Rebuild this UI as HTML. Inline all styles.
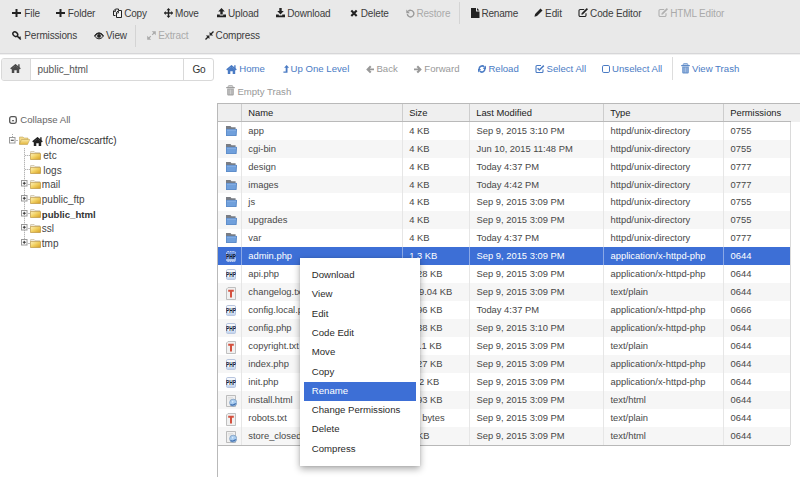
<!DOCTYPE html>
<html><head><meta charset="utf-8"><style>
html,body{margin:0;padding:0}
body{width:800px;height:477px;overflow:hidden;position:relative;background:#fff;font-family:"Liberation Sans", sans-serif}
.t{position:absolute;white-space:nowrap;line-height:14px;font-family:"Liberation Sans", sans-serif}
svg{display:block}
</style></head><body>
<div style="position:absolute;left:0px;top:0px;width:800px;height:53px;background:#e9e9e9"></div><div style="position:absolute;left:0px;top:53px;width:800px;height:1px;background:#d6d6d8"></div><div style="position:absolute;left:0px;top:54px;width:800px;height:1px;background:#f0f0f0"></div><svg style="position:absolute;left:12px;top:9px" width="9" height="8" viewBox="0 0 9 8"><path d="M3.5 0h2v3h3.5v2h-3.5v3h-2v-3h-3.5v-2h3.5z" fill="#222"/></svg><div class="t" style="left:24.3px;top:7.30px;font-size:10.0px;color:#3c3c3c;font-weight:normal;letter-spacing:-0.121px;">File</div><svg style="position:absolute;left:56px;top:9px" width="9" height="8" viewBox="0 0 9 8"><path d="M3.5 0h2v3h3.5v2h-3.5v3h-2v-3h-3.5v-2h3.5z" fill="#222"/></svg><div class="t" style="left:67.8px;top:7.30px;font-size:10.0px;color:#3c3c3c;font-weight:normal;letter-spacing:-0.142px;">Folder</div><svg style="position:absolute;left:112px;top:8px" width="11" height="11" viewBox="0 0 11 11"><path d="M3.5 7.5H1.5V3L3.5 1H6.5V2.5" fill="none" stroke="#222" stroke-width="1"/><path d="M4.5 9.5V4.5L6.5 2.5H9.5V9.5z" fill="#f4f4f4" stroke="#222" stroke-width="1"/><path d="M1.5 3.5H3.5V1.5M4.5 5H6.5V3" fill="none" stroke="#222" stroke-width="0.8"/></svg><div class="t" style="left:124.2px;top:7.30px;font-size:10.0px;color:#3c3c3c;font-weight:normal;letter-spacing:-0.175px;">Copy</div><svg style="position:absolute;left:164px;top:8px" width="9" height="10" viewBox="0 0 9 10"><path d="M4.5 0l2 2.2h-1.3v2.1h2.1v-1.3l2 2-2 2v-1.3h-2.1v2.1h1.3l-2 2.2-2-2.2h1.3v-2.1h-2.1v1.3l-2-2 2-2v1.3h2.1v-2.1h-1.3z" fill="#222"/></svg><div class="t" style="left:175px;top:7.30px;font-size:10.0px;color:#3c3c3c;font-weight:normal;letter-spacing:-0.183px;">Move</div><svg style="position:absolute;left:217px;top:8px" width="9" height="10" viewBox="0 0 9 10"><path d="M4.5 0l3.3 3.5h-2.1v3h-2.4v-3h-2.1z" fill="#222"/><path d="M0 6.5h2.8v1h3.4v-1h2.8v2.8h-9z" fill="#222"/></svg><div class="t" style="left:228px;top:7.30px;font-size:10.0px;color:#3c3c3c;font-weight:normal;letter-spacing:-0.159px;">Upload</div><svg style="position:absolute;left:276px;top:8px" width="9" height="10" viewBox="0 0 9 10"><path d="M3.3 0h2.4v3h2.1l-3.3 3.5-3.3-3.5h2.1z" fill="#222"/><path d="M0 6.5h2.8v1h3.4v-1h2.8v2.8h-9z" fill="#222"/></svg><div class="t" style="left:287.3px;top:7.30px;font-size:10.0px;color:#3c3c3c;font-weight:normal;letter-spacing:-0.167px;">Download</div><svg style="position:absolute;left:350px;top:9px" width="8" height="8" viewBox="0 0 8 8"><path d="M1.3 1.5L6.7 6.9M6.7 1.5L1.3 6.9" stroke="#222" stroke-width="2.1"/></svg><div class="t" style="left:360.7px;top:7.30px;font-size:10.0px;color:#3c3c3c;font-weight:normal;letter-spacing:-0.145px;">Delete</div><svg style="position:absolute;left:406px;top:8.5px" width="9" height="9" viewBox="0 0 9 9"><path d="M2.2 2.3A3.3 3.3 0 1 1 1.3 5.2" fill="none" stroke="#999" stroke-width="1.4"/><path d="M0.3 0.6v3.6h3.6z" fill="#999"/></svg><div class="t" style="left:416.4px;top:7.30px;font-size:10.0px;color:#aaa;font-weight:normal;letter-spacing:-0.150px;">Restore</div><div style="position:absolute;left:459px;top:2px;width:1px;height:22px;background:#d4d4d4"></div><svg style="position:absolute;left:471px;top:8px" width="9" height="10" viewBox="0 0 9 10"><path d="M0 0h5v3.5h3.5v6.5h-8.5z M6 0l2.5 2.5h-2.5z" fill="#222"/></svg><div class="t" style="left:481.4px;top:7.30px;font-size:10.0px;color:#3c3c3c;font-weight:normal;letter-spacing:-0.189px;">Rename</div><svg style="position:absolute;left:534px;top:8px" width="9" height="10" viewBox="0 0 9 10"><path d="M6.5 0.5l2 2-5.5 5.5-2.5 0.7 0.6-2.6z" fill="#222"/></svg><div class="t" style="left:545.1px;top:7.30px;font-size:10.0px;color:#3c3c3c;font-weight:normal;letter-spacing:-0.129px;">Edit</div><svg style="position:absolute;left:578px;top:7px" width="11" height="11" viewBox="0 0 11 11"><path d="M6.2 2.5H2.3A1.3 1.3 0 0 0 1 3.8V8.2A1.3 1.3 0 0 0 2.3 9.5H6.7A1.3 1.3 0 0 0 8 8.2V6.2" fill="none" stroke="#222" stroke-width="1.1"/><path d="M4.2 6.8L9.4 1.6" stroke="#222" stroke-width="1.7"/><path d="M3.3 7.7L3.8 5.9 5.1 7.2z" fill="#222"/></svg><div class="t" style="left:590.1px;top:7.30px;font-size:10.0px;color:#3c3c3c;font-weight:normal;letter-spacing:-0.144px;">Code Editor</div><svg style="position:absolute;left:658px;top:7px" width="11" height="11" viewBox="0 0 11 11"><path d="M6.2 2.5H2.3A1.3 1.3 0 0 0 1 3.8V8.2A1.3 1.3 0 0 0 2.3 9.5H6.7A1.3 1.3 0 0 0 8 8.2V6.2" fill="none" stroke="#b0b0b0" stroke-width="1.1"/><path d="M4.2 6.8L9.4 1.6" stroke="#b0b0b0" stroke-width="1.7"/><path d="M3.3 7.7L3.8 5.9 5.1 7.2z" fill="#b0b0b0"/></svg><div class="t" style="left:670.2px;top:7.30px;font-size:10.0px;color:#aaa;font-weight:normal;letter-spacing:-0.152px;">HTML Editor</div><svg style="position:absolute;left:12px;top:31px" width="10" height="10" viewBox="0 0 10 10"><ellipse cx="3.3" cy="3.2" rx="2.6" ry="2" transform="rotate(40 3.3 3.2)" fill="none" stroke="#222" stroke-width="1.5"/><path d="M5 4.9L8.8 8.5" stroke="#222" stroke-width="1.5"/><path d="M7.2 6.9L8.6 5.7" stroke="#222" stroke-width="1.3"/></svg><div class="t" style="left:24.3px;top:29.40px;font-size:10.0px;color:#3c3c3c;font-weight:normal;letter-spacing:-0.149px;">Permissions</div><svg style="position:absolute;left:94px;top:32px" width="10" height="8" viewBox="0 0 10 8"><path d="M0.5 3.9C2 1.7 3.5 1 5 1S8 1.7 9.5 3.9C8 6.1 6.5 6.8 5 6.8S2 6.1 0.5 3.9z" fill="#d6d6d6" stroke="#222" stroke-width="1"/><path d="M1 3.6C2.5 1.6 3.8 1.1 5 1.1S7.5 1.6 9 3.6" fill="none" stroke="#222" stroke-width="1.3"/><circle cx="5" cy="3.9" r="1.9" fill="#222"/></svg><div class="t" style="left:106px;top:29.40px;font-size:10.0px;color:#3c3c3c;font-weight:normal;letter-spacing:-0.161px;">View</div><div style="position:absolute;left:135px;top:25px;width:1px;height:22px;background:#d4d4d4"></div><svg style="position:absolute;left:147px;top:31px" width="9" height="9" viewBox="0 0 9 9"><path d="M1.5 7.5L3.8 5.2M7.5 1.5L5.2 3.8" stroke="#aaa" stroke-width="1.2"/><path d="M4.8 0.2H8.8V4.2z M0.2 4.8V8.8H4.2z" fill="#aaa"/></svg><div class="t" style="left:158.3px;top:29.40px;font-size:10.0px;color:#aaa;font-weight:normal;letter-spacing:-0.133px;">Extract</div><svg style="position:absolute;left:205px;top:31px" width="9" height="9" viewBox="0 0 9 9"><path d="M8.5 0.5L5.5 3.5M0.5 8.5L3.5 5.5" stroke="#222" stroke-width="1.4"/><path d="M4.6 0.9V4.4H8.1z M0.9 4.6H4.4V8.1z" fill="#222"/></svg><div class="t" style="left:215.6px;top:29.40px;font-size:10.0px;color:#3c3c3c;font-weight:normal;letter-spacing:-0.171px;">Compress</div><div style="position:absolute;left:1px;top:58px;width:211px;height:21px;border:1px solid #d9d9d9;border-radius:3px;background:#fff"></div><div style="position:absolute;left:2px;top:59px;width:28px;height:21px;background:#eeeeee;border-right:1px solid #d9d9d9;border-radius:2px 0 0 2px"></div><div style="position:absolute;left:183px;top:59px;width:1px;height:21px;background:#d9d9d9"></div><svg style="position:absolute;left:10px;top:64px" width="11" height="9" viewBox="0 0 11 9"><path d="M0.7 4.9L5.5 0.9 10.3 4.9" fill="none" stroke="#4a4a4a" stroke-width="1.5" stroke-linejoin="miter"/><path d="M8.2 0.3H9.6V3.6H8.2z" fill="#4a4a4a"/><path d="M1.8 4.6L5.5 1.8 9.2 4.6V9H6.7V6.2H4.3V9H1.8z" fill="#4a4a4a"/></svg><div class="t" style="left:37.5px;top:63.30px;font-size:10px;color:#555;font-weight:normal;">public_html</div><div class="t" style="left:192.6px;top:62.90px;font-size:10.1px;color:#333;font-weight:normal;letter-spacing:-0.5px;">Go</div><svg style="position:absolute;left:226px;top:65px" width="11" height="9" viewBox="0 0 11 9"><path d="M0.7 4.9L5.5 0.9 10.3 4.9" fill="none" stroke="#4a7bc4" stroke-width="1.5" stroke-linejoin="miter"/><path d="M8.2 0.3H9.6V3.6H8.2z" fill="#4a7bc4"/><path d="M1.8 4.6L5.5 1.8 9.2 4.6V9H6.7V6.2H4.3V9H1.8z" fill="#4a7bc4"/></svg><div class="t" style="left:239.3px;top:61.50px;font-size:9.6px;color:#4a7bc4;font-weight:normal;">Home</div><svg style="position:absolute;left:283px;top:65px" width="7" height="8" viewBox="0 0 7 8"><path d="M3.6 0L6.1 2.7H4.5V7.8H0.4V6.4H2.7V2.7H1.1z" fill="#4a7bc4"/></svg><div class="t" style="left:290.6px;top:61.50px;font-size:9.6px;color:#4a7bc4;font-weight:normal;">Up One Level</div><svg style="position:absolute;left:366px;top:65px" width="8" height="9" viewBox="0 0 8 9"><path d="M0.2 4.4L4 0.6 5.5 2.1 3.8 3.6H8V5.2H3.8L5.5 6.7 4 8.2z" fill="#999"/></svg><div class="t" style="left:376.4px;top:61.50px;font-size:9.6px;color:#999;font-weight:normal;">Back</div><svg style="position:absolute;left:414px;top:65px" width="8" height="9" viewBox="0 0 8 9"><path d="M7.8 4.4L4 0.6 2.5 2.1 4.2 3.6H0V5.2H4.2L2.5 6.7 4 8.2z" fill="#999"/></svg><div class="t" style="left:424.3px;top:61.50px;font-size:9.6px;color:#999;font-weight:normal;">Forward</div><svg style="position:absolute;left:478px;top:65px" width="9" height="8" viewBox="0 0 9 8"><path d="M1.2 4.3A2.9 2.9 0 0 1 6.3 2M6.8 3.7A2.9 2.9 0 0 1 1.7 6" fill="none" stroke="#4a7bc4" stroke-width="1.5"/><path d="M8 0.6V3.9H4.9z M0 7.4V4.1H3.1z" fill="#4a7bc4"/></svg><div class="t" style="left:488.4px;top:61.50px;font-size:9.6px;color:#4a7bc4;font-weight:normal;">Reload</div><svg style="position:absolute;left:535px;top:64px" width="10" height="9" viewBox="0 0 10 9"><path d="M6 1.5H2A1 1 0 0 0 1 2.5V7.5A1 1 0 0 0 2 8.5H7A1 1 0 0 0 8 7.5V5.5" fill="none" stroke="#4a7bc4" stroke-width="1.1"/><path d="M2.6 4.2L4.4 6 8.8 1.6" fill="none" stroke="#4a7bc4" stroke-width="1.5"/></svg><div class="t" style="left:546.6px;top:61.50px;font-size:9.6px;color:#4a7bc4;font-weight:normal;">Select All</div><svg style="position:absolute;left:602px;top:65px" width="8" height="8" viewBox="0 0 8 8"><rect x="0.5" y="0.5" width="7" height="7" rx="1.3" fill="none" stroke="#4a7bc4" stroke-width="1"/></svg><div class="t" style="left:612.1px;top:61.50px;font-size:9.6px;color:#4a7bc4;font-weight:normal;">Unselect All</div><div style="position:absolute;left:672px;top:57px;width:1px;height:23px;background:#ddd"></div><svg style="position:absolute;left:681px;top:63px" width="9" height="11" viewBox="0 0 9 11"><path d="M3 0.6H6A0.8 0.8 0 0 1 6.8 1.4V2H2.2V1.4A0.8 0.8 0 0 1 3 0.6z" fill="none" stroke="#6f97cf" stroke-width="0.9"/><path d="M0.2 2H8.8V3.2H0.2z" fill="#5f8bc8"/><path d="M1.2 3.4H7.8V9.6A0.8 0.8 0 0 1 7 10.4H2A0.8 0.8 0 0 1 1.2 9.6z" fill="#6a94cc"/><path d="M3 4.5V9.3M4.5 4.5V9.3M6 4.5V9.3" stroke="#bcd0ec" stroke-width="0.7"/></svg><div class="t" style="left:692px;top:61.50px;font-size:9.6px;color:#4a7bc4;font-weight:normal;">View Trash</div><svg style="position:absolute;left:226px;top:85px" width="9" height="11" viewBox="0 0 9 11"><path d="M3 0.6H6A0.8 0.8 0 0 1 6.8 1.4V2H2.2V1.4A0.8 0.8 0 0 1 3 0.6z" fill="none" stroke="#a8a8a8" stroke-width="0.9"/><path d="M0.2 2H8.8V3.2H0.2z" fill="#9e9e9e"/><path d="M1.2 3.4H7.8V9.6A0.8 0.8 0 0 1 7 10.4H2A0.8 0.8 0 0 1 1.2 9.6z" fill="#a4a4a4"/><path d="M3 4.5V9.3M4.5 4.5V9.3M6 4.5V9.3" stroke="#e0e0e0" stroke-width="0.7"/></svg><div class="t" style="left:237.4px;top:84.70px;font-size:9.6px;color:#999;font-weight:normal;">Empty Trash</div><svg style="position:absolute;left:9px;top:116px" width="8" height="8" viewBox="0 0 8 8"><rect x="0.7" y="0.7" width="6.6" height="6.6" rx="1.8" fill="none" stroke="#555" stroke-width="1.3"/><path d="M2.6 5.2Q4 2.6 5.4 5.2z" fill="#444"/></svg><div class="t" style="left:20.3px;top:113.30px;font-size:9.6px;color:#666;font-weight:normal;">Collapse All</div><div style="position:absolute;left:12px;top:134px;width:1px;height:3px;background:repeating-linear-gradient(#aaa 0 1px,transparent 1px 2px)"></div><div style="position:absolute;left:24px;top:148px;width:1px;height:95px;background:repeating-linear-gradient(#b5b5b5 0 1px,#e6e6e6 1px 2px)"></div><svg style="position:absolute;left:9px;top:137px" width="7" height="7" viewBox="0 0 7 7"><rect x="0.5" y="0.5" width="5.5" height="5.5" fill="#fff" stroke="#999" stroke-width="1"/><path d="M1.8 3.25h3" stroke="#333" stroke-width="1"/></svg><div style="position:absolute;left:16px;top:140px;width:2px;height:1px;background:#bbb"></div><svg style="position:absolute;left:18.5px;top:136px" width="11" height="9" viewBox="0 0 11 9"><defs><linearGradient id="fo" x1="0" y1="0" x2="0" y2="1"><stop offset="0" stop-color="#fbe9a6"/><stop offset="1" stop-color="#e2b53a"/></linearGradient></defs><path d="M0.5 1h3.5l1 1h4v2H2.5L0.5 8z" fill="#f2d98a" stroke="#b99a4a" stroke-width="0.5"/><path d="M2.5 3.5h8.3L8.5 8.5H0.3z" fill="url(#fo)" stroke="#b99a4a" stroke-width="0.5"/></svg><svg style="position:absolute;left:32px;top:137px" width="11" height="9" viewBox="0 0 11 9"><path d="M0.7 4.9L5.5 0.9 10.3 4.9" fill="none" stroke="#222" stroke-width="1.5" stroke-linejoin="miter"/><path d="M8.2 0.3H9.6V3.6H8.2z" fill="#222"/><path d="M1.8 4.6L5.5 1.8 9.2 4.6V9H6.7V6.2H4.3V9H1.8z" fill="#222"/></svg><div class="t" style="left:45px;top:134.10px;font-size:10px;color:#333;font-weight:normal;">(/home/cscartfc)</div><div style="position:absolute;left:25px;top:155px;width:5px;height:1px;background:repeating-linear-gradient(90deg,#b5b5b5 0 1px,#e6e6e6 1px 2px)"></div><svg style="position:absolute;left:30px;top:151px" width="11" height="9" viewBox="0 0 11 9"><defs><linearGradient id="fc" x1="0" y1="0" x2="1" y2="1"><stop offset="0" stop-color="#fff4c4"/><stop offset="0.45" stop-color="#f3d366"/><stop offset="1" stop-color="#d49e22"/></linearGradient></defs><path d="M0.6 0.6h3.6l1 1.1h4.6v1.5H0.6z" fill="#f4f0e2" stroke="#b8ab8a" stroke-width="0.6"/><path d="M0.5 2.6h10v5.9H0.5z" fill="url(#fc)" stroke="#b58a2c" stroke-width="0.6"/></svg><div class="t" style="left:43.3px;top:148.90px;font-size:10px;color:#444;font-weight:normal;">etc</div><div style="position:absolute;left:25px;top:169px;width:5px;height:1px;background:repeating-linear-gradient(90deg,#b5b5b5 0 1px,#e6e6e6 1px 2px)"></div><svg style="position:absolute;left:30px;top:165px" width="11" height="9" viewBox="0 0 11 9"><defs><linearGradient id="fc" x1="0" y1="0" x2="1" y2="1"><stop offset="0" stop-color="#fff4c4"/><stop offset="0.45" stop-color="#f3d366"/><stop offset="1" stop-color="#d49e22"/></linearGradient></defs><path d="M0.6 0.6h3.6l1 1.1h4.6v1.5H0.6z" fill="#f4f0e2" stroke="#b8ab8a" stroke-width="0.6"/><path d="M0.5 2.6h10v5.9H0.5z" fill="url(#fc)" stroke="#b58a2c" stroke-width="0.6"/></svg><div class="t" style="left:43.3px;top:163.58px;font-size:10px;color:#444;font-weight:normal;">logs</div><svg style="position:absolute;left:21px;top:180px" width="7" height="7" viewBox="0 0 7 7"><rect x="0.5" y="0.5" width="5.5" height="5.5" fill="#fff" stroke="#999" stroke-width="1"/><path d="M1.8 3.25h3M3.25 1.8v3" stroke="#333" stroke-width="1"/></svg><div style="position:absolute;left:28px;top:184px;width:2px;height:1px;background:#bbb"></div><svg style="position:absolute;left:30px;top:180px" width="11" height="9" viewBox="0 0 11 9"><defs><linearGradient id="fc" x1="0" y1="0" x2="1" y2="1"><stop offset="0" stop-color="#fff4c4"/><stop offset="0.45" stop-color="#f3d366"/><stop offset="1" stop-color="#d49e22"/></linearGradient></defs><path d="M0.6 0.6h3.6l1 1.1h4.6v1.5H0.6z" fill="#f4f0e2" stroke="#b8ab8a" stroke-width="0.6"/><path d="M0.5 2.6h10v5.9H0.5z" fill="url(#fc)" stroke="#b58a2c" stroke-width="0.6"/></svg><div class="t" style="left:41.8px;top:178.26px;font-size:10px;color:#444;font-weight:normal;">mail</div><svg style="position:absolute;left:21px;top:195px" width="7" height="7" viewBox="0 0 7 7"><rect x="0.5" y="0.5" width="5.5" height="5.5" fill="#fff" stroke="#999" stroke-width="1"/><path d="M1.8 3.25h3M3.25 1.8v3" stroke="#333" stroke-width="1"/></svg><div style="position:absolute;left:28px;top:199px;width:2px;height:1px;background:#bbb"></div><svg style="position:absolute;left:30px;top:195px" width="11" height="9" viewBox="0 0 11 9"><defs><linearGradient id="fc" x1="0" y1="0" x2="1" y2="1"><stop offset="0" stop-color="#fff4c4"/><stop offset="0.45" stop-color="#f3d366"/><stop offset="1" stop-color="#d49e22"/></linearGradient></defs><path d="M0.6 0.6h3.6l1 1.1h4.6v1.5H0.6z" fill="#f4f0e2" stroke="#b8ab8a" stroke-width="0.6"/><path d="M0.5 2.6h10v5.9H0.5z" fill="url(#fc)" stroke="#b58a2c" stroke-width="0.6"/></svg><div class="t" style="left:41.8px;top:192.94px;font-size:10px;color:#444;font-weight:normal;">public_ftp</div><svg style="position:absolute;left:21px;top:210px" width="7" height="7" viewBox="0 0 7 7"><rect x="0.5" y="0.5" width="5.5" height="5.5" fill="#fff" stroke="#999" stroke-width="1"/><path d="M1.8 3.25h3M3.25 1.8v3" stroke="#333" stroke-width="1"/></svg><div style="position:absolute;left:28px;top:213px;width:2px;height:1px;background:#bbb"></div><svg style="position:absolute;left:30px;top:209px" width="11" height="9" viewBox="0 0 11 9"><defs><linearGradient id="fc" x1="0" y1="0" x2="1" y2="1"><stop offset="0" stop-color="#fff4c4"/><stop offset="0.45" stop-color="#f3d366"/><stop offset="1" stop-color="#d49e22"/></linearGradient></defs><path d="M0.6 0.6h3.6l1 1.1h4.6v1.5H0.6z" fill="#f4f0e2" stroke="#b8ab8a" stroke-width="0.6"/><path d="M0.5 2.6h10v5.9H0.5z" fill="url(#fc)" stroke="#b58a2c" stroke-width="0.6"/></svg><div class="t" style="left:41.8px;top:207.62px;font-size:9.6px;color:#333;font-weight:bold;">public_html</div><svg style="position:absolute;left:21px;top:224px" width="7" height="7" viewBox="0 0 7 7"><rect x="0.5" y="0.5" width="5.5" height="5.5" fill="#fff" stroke="#999" stroke-width="1"/><path d="M1.8 3.25h3M3.25 1.8v3" stroke="#333" stroke-width="1"/></svg><div style="position:absolute;left:28px;top:228px;width:2px;height:1px;background:#bbb"></div><svg style="position:absolute;left:30px;top:224px" width="11" height="9" viewBox="0 0 11 9"><defs><linearGradient id="fc" x1="0" y1="0" x2="1" y2="1"><stop offset="0" stop-color="#fff4c4"/><stop offset="0.45" stop-color="#f3d366"/><stop offset="1" stop-color="#d49e22"/></linearGradient></defs><path d="M0.6 0.6h3.6l1 1.1h4.6v1.5H0.6z" fill="#f4f0e2" stroke="#b8ab8a" stroke-width="0.6"/><path d="M0.5 2.6h10v5.9H0.5z" fill="url(#fc)" stroke="#b58a2c" stroke-width="0.6"/></svg><div class="t" style="left:41.8px;top:222.30px;font-size:10px;color:#444;font-weight:normal;">ssl</div><svg style="position:absolute;left:21px;top:239px" width="7" height="7" viewBox="0 0 7 7"><rect x="0.5" y="0.5" width="5.5" height="5.5" fill="#fff" stroke="#999" stroke-width="1"/><path d="M1.8 3.25h3M3.25 1.8v3" stroke="#333" stroke-width="1"/></svg><div style="position:absolute;left:28px;top:243px;width:2px;height:1px;background:#bbb"></div><svg style="position:absolute;left:30px;top:239px" width="11" height="9" viewBox="0 0 11 9"><defs><linearGradient id="fc" x1="0" y1="0" x2="1" y2="1"><stop offset="0" stop-color="#fff4c4"/><stop offset="0.45" stop-color="#f3d366"/><stop offset="1" stop-color="#d49e22"/></linearGradient></defs><path d="M0.6 0.6h3.6l1 1.1h4.6v1.5H0.6z" fill="#f4f0e2" stroke="#b8ab8a" stroke-width="0.6"/><path d="M0.5 2.6h10v5.9H0.5z" fill="url(#fc)" stroke="#b58a2c" stroke-width="0.6"/></svg><div class="t" style="left:41.8px;top:236.98px;font-size:10px;color:#444;font-weight:normal;">tmp</div><div style="position:absolute;left:217px;top:103px;width:583px;height:1px;background:#b9b9b9"></div><div style="position:absolute;left:217px;top:103px;width:1px;height:374px;background:#b9b9b9"></div><div style="position:absolute;left:218px;top:104px;width:582px;height:17px;background:#efefef"></div><div style="position:absolute;left:218px;top:121px;width:573px;height:1px;background:#b9b9b9"></div><div style="position:absolute;left:791px;top:121px;width:9px;height:1px;background:#efefef"></div><div style="position:absolute;left:241px;top:104px;width:1px;height:17px;background:#cdcdcd"></div><div style="position:absolute;left:402px;top:104px;width:1px;height:17px;background:#cdcdcd"></div><div style="position:absolute;left:469px;top:104px;width:1px;height:17px;background:#cdcdcd"></div><div style="position:absolute;left:603px;top:104px;width:1px;height:17px;background:#cdcdcd"></div><div style="position:absolute;left:723px;top:104px;width:1px;height:17px;background:#cdcdcd"></div><div class="t" style="left:248.3px;top:105.70px;font-size:9.4px;color:#222;font-weight:normal;">Name</div><div class="t" style="left:409.2px;top:105.70px;font-size:9.4px;color:#222;font-weight:normal;">Size</div><div class="t" style="left:476.2px;top:105.70px;font-size:9.4px;color:#222;font-weight:normal;">Last Modified</div><div class="t" style="left:610.2px;top:105.70px;font-size:9.4px;color:#222;font-weight:normal;">Type</div><div class="t" style="left:730.2px;top:105.70px;font-size:9.4px;color:#222;font-weight:normal;">Permissions</div><div style="position:absolute;left:218px;top:122px;width:572px;height:18px;background:#ffffff"></div><div style="position:absolute;left:241px;top:122px;width:1px;height:18px;background:#e6e6e6"></div><div style="position:absolute;left:402px;top:122px;width:1px;height:18px;background:#e6e6e6"></div><div style="position:absolute;left:469px;top:122px;width:1px;height:18px;background:#e6e6e6"></div><div style="position:absolute;left:603px;top:122px;width:1px;height:18px;background:#e6e6e6"></div><div style="position:absolute;left:723px;top:122px;width:1px;height:18px;background:#e6e6e6"></div><div class="t" style="left:248.3px;top:123.80px;font-size:9.4px;color:#484848;font-weight:normal;">app</div><div class="t" style="left:409.2px;top:123.80px;font-size:9.4px;color:#484848;font-weight:normal;">4 KB</div><div class="t" style="left:476.5px;top:123.80px;font-size:9.4px;color:#484848;font-weight:normal;">Sep 9, 2015 3:10 PM</div><div class="t" style="left:610.5px;top:123.80px;font-size:9.4px;color:#484848;font-weight:normal;">httpd/unix-directory</div><div class="t" style="left:730.5px;top:123.80px;font-size:9.4px;color:#484848;font-weight:normal;">0755</div><svg style="position:absolute;left:226px;top:126px" width="11" height="10" viewBox="0 0 11 10"><path d="M0 0H4.5L5.5 1.3H9.6V3.5H0z" fill="#7a7d84"/><path d="M0 3H11L10.4 10H0z" fill="#70a0dc"/><path d="M0.3 3.3H10.6L10.1 9.7H0.3z" fill="none" stroke="#4f7cb8" stroke-width="0.6"/><path d="M1 4.2H10" stroke="#93b8e8" stroke-width="0.8"/></svg><div style="position:absolute;left:218px;top:140px;width:572px;height:18px;background:#f6f6f6"></div><div style="position:absolute;left:241px;top:140px;width:1px;height:18px;background:#e6e6e6"></div><div style="position:absolute;left:402px;top:140px;width:1px;height:18px;background:#e6e6e6"></div><div style="position:absolute;left:469px;top:140px;width:1px;height:18px;background:#e6e6e6"></div><div style="position:absolute;left:603px;top:140px;width:1px;height:18px;background:#e6e6e6"></div><div style="position:absolute;left:723px;top:140px;width:1px;height:18px;background:#e6e6e6"></div><div class="t" style="left:248.3px;top:141.80px;font-size:9.4px;color:#484848;font-weight:normal;">cgi-bin</div><div class="t" style="left:409.2px;top:141.80px;font-size:9.4px;color:#484848;font-weight:normal;">4 KB</div><div class="t" style="left:476.5px;top:141.80px;font-size:9.4px;color:#484848;font-weight:normal;">Jun 10, 2015 11:48 PM</div><div class="t" style="left:610.5px;top:141.80px;font-size:9.4px;color:#484848;font-weight:normal;">httpd/unix-directory</div><div class="t" style="left:730.5px;top:141.80px;font-size:9.4px;color:#484848;font-weight:normal;">0755</div><svg style="position:absolute;left:226px;top:144px" width="11" height="10" viewBox="0 0 11 10"><path d="M0 0H4.5L5.5 1.3H9.6V3.5H0z" fill="#7a7d84"/><path d="M0 3H11L10.4 10H0z" fill="#70a0dc"/><path d="M0.3 3.3H10.6L10.1 9.7H0.3z" fill="none" stroke="#4f7cb8" stroke-width="0.6"/><path d="M1 4.2H10" stroke="#93b8e8" stroke-width="0.8"/></svg><div style="position:absolute;left:218px;top:158px;width:572px;height:18px;background:#ffffff"></div><div style="position:absolute;left:241px;top:158px;width:1px;height:18px;background:#e6e6e6"></div><div style="position:absolute;left:402px;top:158px;width:1px;height:18px;background:#e6e6e6"></div><div style="position:absolute;left:469px;top:158px;width:1px;height:18px;background:#e6e6e6"></div><div style="position:absolute;left:603px;top:158px;width:1px;height:18px;background:#e6e6e6"></div><div style="position:absolute;left:723px;top:158px;width:1px;height:18px;background:#e6e6e6"></div><div class="t" style="left:248.3px;top:159.80px;font-size:9.4px;color:#484848;font-weight:normal;">design</div><div class="t" style="left:409.2px;top:159.80px;font-size:9.4px;color:#484848;font-weight:normal;">4 KB</div><div class="t" style="left:476.5px;top:159.80px;font-size:9.4px;color:#484848;font-weight:normal;">Today 4:37 PM</div><div class="t" style="left:610.5px;top:159.80px;font-size:9.4px;color:#484848;font-weight:normal;">httpd/unix-directory</div><div class="t" style="left:730.5px;top:159.80px;font-size:9.4px;color:#484848;font-weight:normal;">0777</div><svg style="position:absolute;left:226px;top:162px" width="11" height="10" viewBox="0 0 11 10"><path d="M0 0H4.5L5.5 1.3H9.6V3.5H0z" fill="#7a7d84"/><path d="M0 3H11L10.4 10H0z" fill="#70a0dc"/><path d="M0.3 3.3H10.6L10.1 9.7H0.3z" fill="none" stroke="#4f7cb8" stroke-width="0.6"/><path d="M1 4.2H10" stroke="#93b8e8" stroke-width="0.8"/></svg><div style="position:absolute;left:218px;top:176px;width:572px;height:17px;background:#f6f6f6"></div><div style="position:absolute;left:241px;top:176px;width:1px;height:17px;background:#e6e6e6"></div><div style="position:absolute;left:402px;top:176px;width:1px;height:17px;background:#e6e6e6"></div><div style="position:absolute;left:469px;top:176px;width:1px;height:17px;background:#e6e6e6"></div><div style="position:absolute;left:603px;top:176px;width:1px;height:17px;background:#e6e6e6"></div><div style="position:absolute;left:723px;top:176px;width:1px;height:17px;background:#e6e6e6"></div><div class="t" style="left:248.3px;top:177.80px;font-size:9.4px;color:#484848;font-weight:normal;">images</div><div class="t" style="left:409.2px;top:177.80px;font-size:9.4px;color:#484848;font-weight:normal;">4 KB</div><div class="t" style="left:476.5px;top:177.80px;font-size:9.4px;color:#484848;font-weight:normal;">Today 4:42 PM</div><div class="t" style="left:610.5px;top:177.80px;font-size:9.4px;color:#484848;font-weight:normal;">httpd/unix-directory</div><div class="t" style="left:730.5px;top:177.80px;font-size:9.4px;color:#484848;font-weight:normal;">0777</div><svg style="position:absolute;left:226px;top:180px" width="11" height="10" viewBox="0 0 11 10"><path d="M0 0H4.5L5.5 1.3H9.6V3.5H0z" fill="#7a7d84"/><path d="M0 3H11L10.4 10H0z" fill="#70a0dc"/><path d="M0.3 3.3H10.6L10.1 9.7H0.3z" fill="none" stroke="#4f7cb8" stroke-width="0.6"/><path d="M1 4.2H10" stroke="#93b8e8" stroke-width="0.8"/></svg><div style="position:absolute;left:218px;top:193px;width:572px;height:18px;background:#ffffff"></div><div style="position:absolute;left:241px;top:193px;width:1px;height:18px;background:#e6e6e6"></div><div style="position:absolute;left:402px;top:193px;width:1px;height:18px;background:#e6e6e6"></div><div style="position:absolute;left:469px;top:193px;width:1px;height:18px;background:#e6e6e6"></div><div style="position:absolute;left:603px;top:193px;width:1px;height:18px;background:#e6e6e6"></div><div style="position:absolute;left:723px;top:193px;width:1px;height:18px;background:#e6e6e6"></div><div class="t" style="left:248.3px;top:194.80px;font-size:9.4px;color:#484848;font-weight:normal;">js</div><div class="t" style="left:409.2px;top:194.80px;font-size:9.4px;color:#484848;font-weight:normal;">4 KB</div><div class="t" style="left:476.5px;top:194.80px;font-size:9.4px;color:#484848;font-weight:normal;">Sep 9, 2015 3:09 PM</div><div class="t" style="left:610.5px;top:194.80px;font-size:9.4px;color:#484848;font-weight:normal;">httpd/unix-directory</div><div class="t" style="left:730.5px;top:194.80px;font-size:9.4px;color:#484848;font-weight:normal;">0755</div><svg style="position:absolute;left:226px;top:197px" width="11" height="10" viewBox="0 0 11 10"><path d="M0 0H4.5L5.5 1.3H9.6V3.5H0z" fill="#7a7d84"/><path d="M0 3H11L10.4 10H0z" fill="#70a0dc"/><path d="M0.3 3.3H10.6L10.1 9.7H0.3z" fill="none" stroke="#4f7cb8" stroke-width="0.6"/><path d="M1 4.2H10" stroke="#93b8e8" stroke-width="0.8"/></svg><div style="position:absolute;left:218px;top:211px;width:572px;height:18px;background:#f6f6f6"></div><div style="position:absolute;left:241px;top:211px;width:1px;height:18px;background:#e6e6e6"></div><div style="position:absolute;left:402px;top:211px;width:1px;height:18px;background:#e6e6e6"></div><div style="position:absolute;left:469px;top:211px;width:1px;height:18px;background:#e6e6e6"></div><div style="position:absolute;left:603px;top:211px;width:1px;height:18px;background:#e6e6e6"></div><div style="position:absolute;left:723px;top:211px;width:1px;height:18px;background:#e6e6e6"></div><div class="t" style="left:248.3px;top:212.80px;font-size:9.4px;color:#484848;font-weight:normal;">upgrades</div><div class="t" style="left:409.2px;top:212.80px;font-size:9.4px;color:#484848;font-weight:normal;">4 KB</div><div class="t" style="left:476.5px;top:212.80px;font-size:9.4px;color:#484848;font-weight:normal;">Sep 9, 2015 3:09 PM</div><div class="t" style="left:610.5px;top:212.80px;font-size:9.4px;color:#484848;font-weight:normal;">httpd/unix-directory</div><div class="t" style="left:730.5px;top:212.80px;font-size:9.4px;color:#484848;font-weight:normal;">0755</div><svg style="position:absolute;left:226px;top:215px" width="11" height="10" viewBox="0 0 11 10"><path d="M0 0H4.5L5.5 1.3H9.6V3.5H0z" fill="#7a7d84"/><path d="M0 3H11L10.4 10H0z" fill="#70a0dc"/><path d="M0.3 3.3H10.6L10.1 9.7H0.3z" fill="none" stroke="#4f7cb8" stroke-width="0.6"/><path d="M1 4.2H10" stroke="#93b8e8" stroke-width="0.8"/></svg><div style="position:absolute;left:218px;top:229px;width:572px;height:18px;background:#ffffff"></div><div style="position:absolute;left:241px;top:229px;width:1px;height:18px;background:#e6e6e6"></div><div style="position:absolute;left:402px;top:229px;width:1px;height:18px;background:#e6e6e6"></div><div style="position:absolute;left:469px;top:229px;width:1px;height:18px;background:#e6e6e6"></div><div style="position:absolute;left:603px;top:229px;width:1px;height:18px;background:#e6e6e6"></div><div style="position:absolute;left:723px;top:229px;width:1px;height:18px;background:#e6e6e6"></div><div class="t" style="left:248.3px;top:230.80px;font-size:9.4px;color:#484848;font-weight:normal;">var</div><div class="t" style="left:409.2px;top:230.80px;font-size:9.4px;color:#484848;font-weight:normal;">4 KB</div><div class="t" style="left:476.5px;top:230.80px;font-size:9.4px;color:#484848;font-weight:normal;">Today 4:37 PM</div><div class="t" style="left:610.5px;top:230.80px;font-size:9.4px;color:#484848;font-weight:normal;">httpd/unix-directory</div><div class="t" style="left:730.5px;top:230.80px;font-size:9.4px;color:#484848;font-weight:normal;">0777</div><svg style="position:absolute;left:226px;top:233px" width="11" height="10" viewBox="0 0 11 10"><path d="M0 0H4.5L5.5 1.3H9.6V3.5H0z" fill="#7a7d84"/><path d="M0 3H11L10.4 10H0z" fill="#70a0dc"/><path d="M0.3 3.3H10.6L10.1 9.7H0.3z" fill="none" stroke="#4f7cb8" stroke-width="0.6"/><path d="M1 4.2H10" stroke="#93b8e8" stroke-width="0.8"/></svg><div style="position:absolute;left:218px;top:247px;width:572px;height:18px;background:#3d6fd6"></div><div style="position:absolute;left:241px;top:247px;width:1px;height:18px;background:#8aa8e6"></div><div style="position:absolute;left:402px;top:247px;width:1px;height:18px;background:#8aa8e6"></div><div style="position:absolute;left:469px;top:247px;width:1px;height:18px;background:#8aa8e6"></div><div style="position:absolute;left:603px;top:247px;width:1px;height:18px;background:#8aa8e6"></div><div style="position:absolute;left:723px;top:247px;width:1px;height:18px;background:#8aa8e6"></div><div class="t" style="left:248.3px;top:248.80px;font-size:9.4px;color:#fff;font-weight:normal;">admin.php</div><div class="t" style="left:409.2px;top:248.80px;font-size:9.4px;color:#fff;font-weight:normal;">1.3 KB</div><div class="t" style="left:476.5px;top:248.80px;font-size:9.4px;color:#fff;font-weight:normal;">Sep 9, 2015 3:09 PM</div><div class="t" style="left:610.5px;top:248.80px;font-size:9.4px;color:#fff;font-weight:normal;">application/x-httpd-php</div><div class="t" style="left:730.5px;top:248.80px;font-size:9.4px;color:#fff;font-weight:normal;">0644</div><svg style="position:absolute;left:226px;top:251px" width="10" height="11" viewBox="0 0 10 11"><rect x="0.5" y="0.5" width="9" height="10" rx="1.2" fill="rgba(255,255,255,0.28)" stroke="#d3def5" stroke-width="0.8" stroke-dasharray="1.5 0.8"/><rect x="0.8" y="8.2" width="8.4" height="2" fill="#b5c9ef"/><text x="0" y="7.6" font-family="Liberation Sans" font-weight="bold" font-size="7" textLength="10" lengthAdjust="spacingAndGlyphs" fill="#111a2c">PHP</text></svg><div style="position:absolute;left:218px;top:265px;width:572px;height:18px;background:#ffffff"></div><div style="position:absolute;left:241px;top:265px;width:1px;height:18px;background:#e6e6e6"></div><div style="position:absolute;left:402px;top:265px;width:1px;height:18px;background:#e6e6e6"></div><div style="position:absolute;left:469px;top:265px;width:1px;height:18px;background:#e6e6e6"></div><div style="position:absolute;left:603px;top:265px;width:1px;height:18px;background:#e6e6e6"></div><div style="position:absolute;left:723px;top:265px;width:1px;height:18px;background:#e6e6e6"></div><div class="t" style="left:248.3px;top:266.80px;font-size:9.4px;color:#484848;font-weight:normal;">api.php</div><div class="t" style="left:409.2px;top:266.80px;font-size:9.4px;color:#484848;font-weight:normal;">5.28 KB</div><div class="t" style="left:476.5px;top:266.80px;font-size:9.4px;color:#484848;font-weight:normal;">Sep 9, 2015 3:09 PM</div><div class="t" style="left:610.5px;top:266.80px;font-size:9.4px;color:#484848;font-weight:normal;">application/x-httpd-php</div><div class="t" style="left:730.5px;top:266.80px;font-size:9.4px;color:#484848;font-weight:normal;">0644</div><svg style="position:absolute;left:226px;top:269px" width="10" height="11" viewBox="0 0 10 11"><rect x="0.5" y="0.5" width="9" height="10" rx="1.2" fill="#f4f7fc" stroke="#a7b8d6" stroke-width="0.8"/><rect x="0.8" y="8.2" width="8.4" height="2" fill="#c5d6f0"/><text x="0" y="7.6" font-family="Liberation Sans" font-weight="bold" font-size="7" textLength="10" lengthAdjust="spacingAndGlyphs" fill="#15203a">PHP</text></svg><div style="position:absolute;left:218px;top:283px;width:572px;height:18px;background:#f6f6f6"></div><div style="position:absolute;left:241px;top:283px;width:1px;height:18px;background:#e6e6e6"></div><div style="position:absolute;left:402px;top:283px;width:1px;height:18px;background:#e6e6e6"></div><div style="position:absolute;left:469px;top:283px;width:1px;height:18px;background:#e6e6e6"></div><div style="position:absolute;left:603px;top:283px;width:1px;height:18px;background:#e6e6e6"></div><div style="position:absolute;left:723px;top:283px;width:1px;height:18px;background:#e6e6e6"></div><div class="t" style="left:248.3px;top:284.80px;font-size:9.4px;color:#484848;font-weight:normal;">changelog.txt</div><div class="t" style="left:409.2px;top:284.80px;font-size:9.4px;color:#484848;font-weight:normal;">119.04 KB</div><div class="t" style="left:476.5px;top:284.80px;font-size:9.4px;color:#484848;font-weight:normal;">Sep 9, 2015 3:09 PM</div><div class="t" style="left:610.5px;top:284.80px;font-size:9.4px;color:#484848;font-weight:normal;">text/plain</div><div class="t" style="left:730.5px;top:284.80px;font-size:9.4px;color:#484848;font-weight:normal;">0644</div><svg style="position:absolute;left:226px;top:287px" width="10" height="13" viewBox="0 0 10 13"><path d="M2 0.5H9.5V12.5H0.5V2z" fill="#f1f1f1" stroke="#b9b9b9" stroke-width="0.9"/><path d="M2.2 2.8H7.8V4.8H6V10.6H4V4.8H2.2z" fill="#d4513f"/></svg><div style="position:absolute;left:218px;top:301px;width:572px;height:18px;background:#ffffff"></div><div style="position:absolute;left:241px;top:301px;width:1px;height:18px;background:#e6e6e6"></div><div style="position:absolute;left:402px;top:301px;width:1px;height:18px;background:#e6e6e6"></div><div style="position:absolute;left:469px;top:301px;width:1px;height:18px;background:#e6e6e6"></div><div style="position:absolute;left:603px;top:301px;width:1px;height:18px;background:#e6e6e6"></div><div style="position:absolute;left:723px;top:301px;width:1px;height:18px;background:#e6e6e6"></div><div class="t" style="left:248.3px;top:302.80px;font-size:9.4px;color:#484848;font-weight:normal;">config.local.php</div><div class="t" style="left:409.2px;top:302.80px;font-size:9.4px;color:#484848;font-weight:normal;">1.96 KB</div><div class="t" style="left:476.5px;top:302.80px;font-size:9.4px;color:#484848;font-weight:normal;">Today 4:37 PM</div><div class="t" style="left:610.5px;top:302.80px;font-size:9.4px;color:#484848;font-weight:normal;">application/x-httpd-php</div><div class="t" style="left:730.5px;top:302.80px;font-size:9.4px;color:#484848;font-weight:normal;">0666</div><svg style="position:absolute;left:226px;top:305px" width="10" height="11" viewBox="0 0 10 11"><rect x="0.5" y="0.5" width="9" height="10" rx="1.2" fill="#f4f7fc" stroke="#a7b8d6" stroke-width="0.8"/><rect x="0.8" y="8.2" width="8.4" height="2" fill="#c5d6f0"/><text x="0" y="7.6" font-family="Liberation Sans" font-weight="bold" font-size="7" textLength="10" lengthAdjust="spacingAndGlyphs" fill="#15203a">PHP</text></svg><div style="position:absolute;left:218px;top:319px;width:572px;height:18px;background:#f6f6f6"></div><div style="position:absolute;left:241px;top:319px;width:1px;height:18px;background:#e6e6e6"></div><div style="position:absolute;left:402px;top:319px;width:1px;height:18px;background:#e6e6e6"></div><div style="position:absolute;left:469px;top:319px;width:1px;height:18px;background:#e6e6e6"></div><div style="position:absolute;left:603px;top:319px;width:1px;height:18px;background:#e6e6e6"></div><div style="position:absolute;left:723px;top:319px;width:1px;height:18px;background:#e6e6e6"></div><div class="t" style="left:248.3px;top:320.80px;font-size:9.4px;color:#484848;font-weight:normal;">config.php</div><div class="t" style="left:409.2px;top:320.80px;font-size:9.4px;color:#484848;font-weight:normal;">1.38 KB</div><div class="t" style="left:476.5px;top:320.80px;font-size:9.4px;color:#484848;font-weight:normal;">Sep 9, 2015 3:10 PM</div><div class="t" style="left:610.5px;top:320.80px;font-size:9.4px;color:#484848;font-weight:normal;">application/x-httpd-php</div><div class="t" style="left:730.5px;top:320.80px;font-size:9.4px;color:#484848;font-weight:normal;">0644</div><svg style="position:absolute;left:226px;top:323px" width="10" height="11" viewBox="0 0 10 11"><rect x="0.5" y="0.5" width="9" height="10" rx="1.2" fill="#f4f7fc" stroke="#a7b8d6" stroke-width="0.8"/><rect x="0.8" y="8.2" width="8.4" height="2" fill="#c5d6f0"/><text x="0" y="7.6" font-family="Liberation Sans" font-weight="bold" font-size="7" textLength="10" lengthAdjust="spacingAndGlyphs" fill="#15203a">PHP</text></svg><div style="position:absolute;left:218px;top:337px;width:572px;height:18px;background:#ffffff"></div><div style="position:absolute;left:241px;top:337px;width:1px;height:18px;background:#e6e6e6"></div><div style="position:absolute;left:402px;top:337px;width:1px;height:18px;background:#e6e6e6"></div><div style="position:absolute;left:469px;top:337px;width:1px;height:18px;background:#e6e6e6"></div><div style="position:absolute;left:603px;top:337px;width:1px;height:18px;background:#e6e6e6"></div><div style="position:absolute;left:723px;top:337px;width:1px;height:18px;background:#e6e6e6"></div><div class="t" style="left:248.3px;top:338.80px;font-size:9.4px;color:#484848;font-weight:normal;">copyright.txt</div><div class="t" style="left:409.2px;top:338.80px;font-size:9.4px;color:#484848;font-weight:normal;">11.1 KB</div><div class="t" style="left:476.5px;top:338.80px;font-size:9.4px;color:#484848;font-weight:normal;">Sep 9, 2015 3:09 PM</div><div class="t" style="left:610.5px;top:338.80px;font-size:9.4px;color:#484848;font-weight:normal;">text/plain</div><div class="t" style="left:730.5px;top:338.80px;font-size:9.4px;color:#484848;font-weight:normal;">0644</div><svg style="position:absolute;left:226px;top:341px" width="10" height="13" viewBox="0 0 10 13"><path d="M2 0.5H9.5V12.5H0.5V2z" fill="#f1f1f1" stroke="#b9b9b9" stroke-width="0.9"/><path d="M2.2 2.8H7.8V4.8H6V10.6H4V4.8H2.2z" fill="#d4513f"/></svg><div style="position:absolute;left:218px;top:355px;width:572px;height:18px;background:#f6f6f6"></div><div style="position:absolute;left:241px;top:355px;width:1px;height:18px;background:#e6e6e6"></div><div style="position:absolute;left:402px;top:355px;width:1px;height:18px;background:#e6e6e6"></div><div style="position:absolute;left:469px;top:355px;width:1px;height:18px;background:#e6e6e6"></div><div style="position:absolute;left:603px;top:355px;width:1px;height:18px;background:#e6e6e6"></div><div style="position:absolute;left:723px;top:355px;width:1px;height:18px;background:#e6e6e6"></div><div class="t" style="left:248.3px;top:356.80px;font-size:9.4px;color:#484848;font-weight:normal;">index.php</div><div class="t" style="left:409.2px;top:356.80px;font-size:9.4px;color:#484848;font-weight:normal;">1.27 KB</div><div class="t" style="left:476.5px;top:356.80px;font-size:9.4px;color:#484848;font-weight:normal;">Sep 9, 2015 3:09 PM</div><div class="t" style="left:610.5px;top:356.80px;font-size:9.4px;color:#484848;font-weight:normal;">application/x-httpd-php</div><div class="t" style="left:730.5px;top:356.80px;font-size:9.4px;color:#484848;font-weight:normal;">0644</div><svg style="position:absolute;left:226px;top:359px" width="10" height="11" viewBox="0 0 10 11"><rect x="0.5" y="0.5" width="9" height="10" rx="1.2" fill="#f4f7fc" stroke="#a7b8d6" stroke-width="0.8"/><rect x="0.8" y="8.2" width="8.4" height="2" fill="#c5d6f0"/><text x="0" y="7.6" font-family="Liberation Sans" font-weight="bold" font-size="7" textLength="10" lengthAdjust="spacingAndGlyphs" fill="#15203a">PHP</text></svg><div style="position:absolute;left:218px;top:373px;width:572px;height:18px;background:#ffffff"></div><div style="position:absolute;left:241px;top:373px;width:1px;height:18px;background:#e6e6e6"></div><div style="position:absolute;left:402px;top:373px;width:1px;height:18px;background:#e6e6e6"></div><div style="position:absolute;left:469px;top:373px;width:1px;height:18px;background:#e6e6e6"></div><div style="position:absolute;left:603px;top:373px;width:1px;height:18px;background:#e6e6e6"></div><div style="position:absolute;left:723px;top:373px;width:1px;height:18px;background:#e6e6e6"></div><div class="t" style="left:248.3px;top:374.80px;font-size:9.4px;color:#484848;font-weight:normal;">init.php</div><div class="t" style="left:409.2px;top:374.80px;font-size:9.4px;color:#484848;font-weight:normal;">112 KB</div><div class="t" style="left:476.5px;top:374.80px;font-size:9.4px;color:#484848;font-weight:normal;">Sep 9, 2015 3:09 PM</div><div class="t" style="left:610.5px;top:374.80px;font-size:9.4px;color:#484848;font-weight:normal;">application/x-httpd-php</div><div class="t" style="left:730.5px;top:374.80px;font-size:9.4px;color:#484848;font-weight:normal;">0644</div><svg style="position:absolute;left:226px;top:377px" width="10" height="11" viewBox="0 0 10 11"><rect x="0.5" y="0.5" width="9" height="10" rx="1.2" fill="#f4f7fc" stroke="#a7b8d6" stroke-width="0.8"/><rect x="0.8" y="8.2" width="8.4" height="2" fill="#c5d6f0"/><text x="0" y="7.6" font-family="Liberation Sans" font-weight="bold" font-size="7" textLength="10" lengthAdjust="spacingAndGlyphs" fill="#15203a">PHP</text></svg><div style="position:absolute;left:218px;top:391px;width:572px;height:18px;background:#f6f6f6"></div><div style="position:absolute;left:241px;top:391px;width:1px;height:18px;background:#e6e6e6"></div><div style="position:absolute;left:402px;top:391px;width:1px;height:18px;background:#e6e6e6"></div><div style="position:absolute;left:469px;top:391px;width:1px;height:18px;background:#e6e6e6"></div><div style="position:absolute;left:603px;top:391px;width:1px;height:18px;background:#e6e6e6"></div><div style="position:absolute;left:723px;top:391px;width:1px;height:18px;background:#e6e6e6"></div><div class="t" style="left:248.3px;top:392.80px;font-size:9.4px;color:#484848;font-weight:normal;">install.html</div><div class="t" style="left:409.2px;top:392.80px;font-size:9.4px;color:#484848;font-weight:normal;">1.93 KB</div><div class="t" style="left:476.5px;top:392.80px;font-size:9.4px;color:#484848;font-weight:normal;">Sep 9, 2015 3:09 PM</div><div class="t" style="left:610.5px;top:392.80px;font-size:9.4px;color:#484848;font-weight:normal;">text/html</div><div class="t" style="left:730.5px;top:392.80px;font-size:9.4px;color:#484848;font-weight:normal;">0644</div><svg style="position:absolute;left:226px;top:395px" width="11" height="12" viewBox="0 0 11 12"><path d="M0.5 0.5H9.5V11.5H0.5z" fill="#f0f0f0" stroke="#b5b5b5" stroke-width="0.9"/><path d="M2 2.5H7M2 4H6" stroke="#d8d8d8" stroke-width="0.7"/><circle cx="7.2" cy="7.7" r="3.6" fill="#a9cdf0" stroke="#7c98b8" stroke-width="0.7"/><path d="M4.5 9.5Q7 11 9.8 8.5" stroke="#3f6fb0" stroke-width="1.2" fill="none"/><path d="M6 5.5l1.5 1 -1 1.5z" fill="#e8f4ff"/></svg><div style="position:absolute;left:218px;top:409px;width:572px;height:18px;background:#ffffff"></div><div style="position:absolute;left:241px;top:409px;width:1px;height:18px;background:#e6e6e6"></div><div style="position:absolute;left:402px;top:409px;width:1px;height:18px;background:#e6e6e6"></div><div style="position:absolute;left:469px;top:409px;width:1px;height:18px;background:#e6e6e6"></div><div style="position:absolute;left:603px;top:409px;width:1px;height:18px;background:#e6e6e6"></div><div style="position:absolute;left:723px;top:409px;width:1px;height:18px;background:#e6e6e6"></div><div class="t" style="left:248.3px;top:410.80px;font-size:9.4px;color:#484848;font-weight:normal;">robots.txt</div><div class="t" style="left:409.2px;top:410.80px;font-size:9.4px;color:#484848;font-weight:normal;">32 bytes</div><div class="t" style="left:476.5px;top:410.80px;font-size:9.4px;color:#484848;font-weight:normal;">Sep 9, 2015 3:09 PM</div><div class="t" style="left:610.5px;top:410.80px;font-size:9.4px;color:#484848;font-weight:normal;">text/plain</div><div class="t" style="left:730.5px;top:410.80px;font-size:9.4px;color:#484848;font-weight:normal;">0644</div><svg style="position:absolute;left:226px;top:413px" width="10" height="13" viewBox="0 0 10 13"><path d="M2 0.5H9.5V12.5H0.5V2z" fill="#f1f1f1" stroke="#b9b9b9" stroke-width="0.9"/><path d="M2.2 2.8H7.8V4.8H6V10.6H4V4.8H2.2z" fill="#d4513f"/></svg><div style="position:absolute;left:218px;top:427px;width:572px;height:18px;background:#f6f6f6"></div><div style="position:absolute;left:241px;top:427px;width:1px;height:18px;background:#e6e6e6"></div><div style="position:absolute;left:402px;top:427px;width:1px;height:18px;background:#e6e6e6"></div><div style="position:absolute;left:469px;top:427px;width:1px;height:18px;background:#e6e6e6"></div><div style="position:absolute;left:603px;top:427px;width:1px;height:18px;background:#e6e6e6"></div><div style="position:absolute;left:723px;top:427px;width:1px;height:18px;background:#e6e6e6"></div><div class="t" style="left:248.3px;top:428.80px;font-size:9.4px;color:#484848;font-weight:normal;">store_closed.html</div><div class="t" style="left:409.2px;top:428.80px;font-size:9.4px;color:#484848;font-weight:normal;">3 KB</div><div class="t" style="left:476.5px;top:428.80px;font-size:9.4px;color:#484848;font-weight:normal;">Sep 9, 2015 3:09 PM</div><div class="t" style="left:610.5px;top:428.80px;font-size:9.4px;color:#484848;font-weight:normal;">text/html</div><div class="t" style="left:730.5px;top:428.80px;font-size:9.4px;color:#484848;font-weight:normal;">0644</div><svg style="position:absolute;left:226px;top:431px" width="11" height="12" viewBox="0 0 11 12"><path d="M0.5 0.5H9.5V11.5H0.5z" fill="#f0f0f0" stroke="#b5b5b5" stroke-width="0.9"/><path d="M2 2.5H7M2 4H6" stroke="#d8d8d8" stroke-width="0.7"/><circle cx="7.2" cy="7.7" r="3.6" fill="#a9cdf0" stroke="#7c98b8" stroke-width="0.7"/><path d="M4.5 9.5Q7 11 9.8 8.5" stroke="#3f6fb0" stroke-width="1.2" fill="none"/><path d="M6 5.5l1.5 1 -1 1.5z" fill="#e8f4ff"/></svg><div style="position:absolute;left:218px;top:445px;width:572px;height:1px;background:#b8b8b8"></div><div style="position:absolute;left:790px;top:122px;width:1px;height:323px;background:#dadada"></div><div style="position:absolute;left:300px;top:258px;width:120px;height:208px;background:#fff;box-shadow:0 3px 7px rgba(0,0,0,0.33), 0 0 2px rgba(0,0,0,0.12)"></div><div style="position:absolute;left:304px;top:382px;width:112px;height:19px;background:#3d6fd6"></div><div class="t" style="left:311.8px;top:267.90px;font-size:9.6px;color:#2a2a2a;font-weight:normal;">Download</div><div class="t" style="left:311.8px;top:287.22px;font-size:9.6px;color:#2a2a2a;font-weight:normal;">View</div><div class="t" style="left:311.8px;top:306.54px;font-size:9.6px;color:#2a2a2a;font-weight:normal;">Edit</div><div class="t" style="left:311.8px;top:325.86px;font-size:9.6px;color:#2a2a2a;font-weight:normal;">Code Edit</div><div class="t" style="left:311.8px;top:345.18px;font-size:9.6px;color:#2a2a2a;font-weight:normal;">Move</div><div class="t" style="left:311.8px;top:364.50px;font-size:9.6px;color:#2a2a2a;font-weight:normal;">Copy</div><div class="t" style="left:311.8px;top:383.82px;font-size:9.6px;color:#fff;font-weight:normal;">Rename</div><div class="t" style="left:311.8px;top:403.14px;font-size:9.6px;color:#2a2a2a;font-weight:normal;">Change Permissions</div><div class="t" style="left:311.8px;top:422.46px;font-size:9.6px;color:#2a2a2a;font-weight:normal;">Delete</div><div class="t" style="left:311.8px;top:441.78px;font-size:9.6px;color:#2a2a2a;font-weight:normal;">Compress</div>
</body></html>
